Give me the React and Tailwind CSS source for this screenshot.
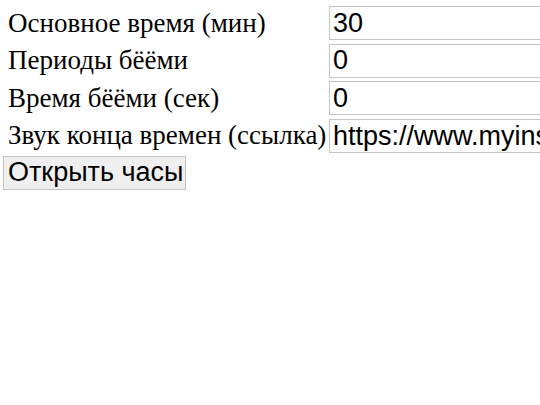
export default function App() {
  const rows = [
    { label: "Основное время (мин)", value: "30" },
    { label: "Периоды бёёми", value: "0" },
    { label: "Время бёёми (сек)", value: "0" },
    { label: "Звук конца времен (ссылка)", value: "https://www.myinstants.com/media/sounds/end.mp3" },
  ];
  return (
    <div className="w-[540px] h-[405px] overflow-hidden bg-white text-black">
      <div className="grid grid-cols-[326px_400px] gap-y-[3.67px] pt-[6px] pl-[3px]">
        {rows.map((r) => (
          <div key={r.label} className="contents">
            <div className="h-[34px] flex items-center pl-[5px] text-[27px] leading-none whitespace-nowrap" style={{ fontFamily: '"Liberation Serif", "Times New Roman", serif' }}>
              {r.label}
            </div>
            <input
              readOnly
              value={r.value}
              className="h-[34px] w-[400px] border border-[#c4c4c4] bg-white px-[3px] text-[27px] text-black outline-none"
              style={{ fontFamily: '"Liberation Sans", Arial, sans-serif' }}
            />
          </div>
        ))}
      </div>
      <div className="pl-[3px] pt-[3px]">
        <button
          className="h-[34px] w-[183px] border border-[#c4c4c4] bg-[#efefef] px-[4px] text-left text-[27px] leading-none text-black whitespace-nowrap"
          style={{ fontFamily: '"Liberation Sans", Arial, sans-serif' }}
        >
          Открыть часы
        </button>
      </div>
    </div>
  );
}
